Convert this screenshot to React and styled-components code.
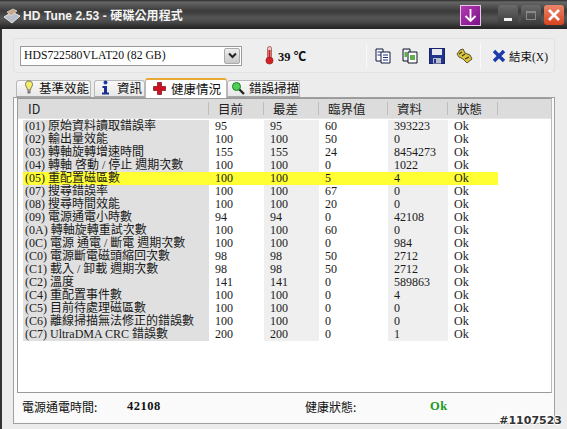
// Dependencies
// -----------------------------------------------
import React from 'react';
import styled, { createGlobalStyle } from 'styled-components';

// Data
// -----------------------------------------------
const COLUMNS = [
  { label: '目前', width: 55 },
  { label: '最差', width: 55 },
  { label: '臨界值', width: 69 },
  { label: '資料', width: 60 },
  { label: '狀態', width: 50 }
];

const ROWS = [
  ['(01) 原始資料讀取錯誤率', '95', '95', '60', '393223', 'Ok'],
  ['(02) 輸出量效能', '100', '100', '50', '0', 'Ok'],
  ['(03) 轉軸旋轉增速時間', '155', '155', '24', '8454273', 'Ok'],
  ['(04) 轉軸 啓動 / 停止 週期次數', '100', '100', '0', '1022', 'Ok'],
  ['(05) 重配置磁區數', '100', '100', '5', '4', 'Ok'],
  ['(07) 搜尋錯誤率', '100', '100', '67', '0', 'Ok'],
  ['(08) 搜尋時間效能', '100', '100', '20', '0', 'Ok'],
  ['(09) 電源通電小時數', '94', '94', '0', '42108', 'Ok'],
  ['(0A) 轉軸旋轉重試次數', '100', '100', '60', '0', 'Ok'],
  ['(0C) 電源 通電 / 斷電 週期次數', '100', '100', '0', '984', 'Ok'],
  ['(C0) 電源斷電磁頭縮回次數', '98', '98', '50', '2712', 'Ok'],
  ['(C1) 載入 / 卸載 週期次數', '98', '98', '50', '2712', 'Ok'],
  ['(C2) 溫度', '141', '141', '0', '589863', 'Ok'],
  ['(C4) 重配置事件數', '100', '100', '0', '4', 'Ok'],
  ['(C5) 目前待處理磁區數', '100', '100', '0', '0', 'Ok'],
  ['(C6) 離線掃描無法修正的錯誤數', '100', '100', '0', '0', 'Ok'],
  ['(C7) UltraDMA CRC 錯誤數', '200', '200', '0', '1', 'Ok']
];

const HIGHLIGHT_ROW = 4;

// Styles
// -----------------------------------------------
const GlobalStyle = createGlobalStyle`
  html, body {
    margin: 0;
    padding: 0;
    width: 567px;
    height: 429px;
    overflow: hidden;
    background: #ececec;
  }
  body {
    font-family: "Liberation Serif", "Noto Sans CJK TC", serif;
    font-size: 12px;
    color: #111;
  }
`;

const Window = styled.div`
  position: relative;
  width: 567px;
  height: 429px;
  display: flex;
  flex-direction: column;
  overflow: hidden;
`;

const TitleBar = styled.div`
  height: 29px;
  flex: none;
  box-sizing: border-box;
  padding: 5px 3px 0 3px;
  display: flex;
  align-items: flex-start;
  background: linear-gradient(#2a2a2a 0, #666 2px, #3a3a3a 11px, #555 18px, #484848 22px, #262626 28px);
`;

const TitleIcon = styled.div`
  margin-top: 3px;
  display: flex;
`;

const Title = styled.span`
  margin: 3px 0 0 2px;
  font: bold 12px/17px "Liberation Sans", "Noto Sans CJK TC", sans-serif;
  color: #f4f4f4;
  letter-spacing: 0.1px;
`;

const TitleSpacer = styled.div`
  flex: 1;
`;

const DownloadButton = styled.div`
  width: 21px;
  height: 21px;
  box-sizing: border-box;
  border: 1px solid #e8c8e8;
  background: linear-gradient(135deg, #b23ab2, #7d1187);
  margin-right: 17px;
  display: flex;
  align-items: center;
  justify-content: center;
`;

const WindowButton = styled.div`
  width: 20px;
  height: 20px;
  margin-left: ${(p) => (p.$first ? '0' : '3px')};
  box-sizing: border-box;
  border-radius: 3px;
  display: flex;
  align-items: center;
  justify-content: center;
  background: ${(p) => (p.$close
    ? 'linear-gradient(#e8876a, #d8431f)'
    : 'linear-gradient(#6a6a6a, #3a3a3a)')};
`;

const MinGlyph = styled.span`
  width: 8px;
  height: 3px;
  margin-top: 8px;
  background: #f4f4f4;
`;

const MaxGlyph = styled.span`
  width: 10px;
  height: 9px;
  box-sizing: border-box;
  border: 1px solid #888;
  border-top-width: 2px;
`;

const Body = styled.div`
  flex: 1;
  min-height: 0;
  display: flex;
  flex-direction: column;
  border-left: 2px solid #333;
  padding: 9px 12px 5px 11px;
  background: #ececec;
`;

const Toolbar = styled.div`
  height: 35px;
  flex: none;
  box-sizing: border-box;
  border: 1px solid #e2e2e2;
  border-radius: 4px;
  display: flex;
  align-items: center;
  padding-left: 6px;
  background: #eeeeee;
`;

const DriveSelect = styled.div`
  width: 222px;
  height: 20px;
  box-sizing: border-box;
  border: 1px solid #9a9a9a;
  background: #fff;
  display: flex;
  align-items: center;
  justify-content: space-between;
  padding-left: 3px;
  font-size: 11.7px;
`;

const SelectArrow = styled.div`
  width: 16px;
  height: 16px;
  margin-right: 1px;
  border: 1px solid #aaa;
  box-sizing: border-box;
  border-radius: 2px;
  background: linear-gradient(#eee, #c8c8c8);
  display: flex;
  align-items: center;
  justify-content: center;
`;

const Temperature = styled.div`
  margin-left: 22px;
  display: flex;
  align-items: center;
  gap: 3px;
  width: 102px;
  font: bold 12.5px "Liberation Serif", "Noto Sans CJK TC", serif;
`;

const ToolGroup = styled.div`
  display: flex;
  align-items: center;
  gap: 11px;
  height: 24px;
  padding: 0 7px 0 8px;
  border-left: 1px solid #fafafa;
  border-right: 1px solid #fafafa;
`;

const ExitButton = styled.div`
  margin-left: 11px;
  display: flex;
  align-items: center;
  gap: 3px;
  font-size: 11.5px;
  white-space: nowrap;
`;

const TabBar = styled.div`
  height: 19px;
  flex: none;
  margin-top: 5px;
  padding-left: 3px;
  display: flex;
  align-items: flex-end;
  position: relative;
  z-index: 1;
`;

const Tab = styled.div`
  box-sizing: border-box;
  width: ${(p) => p.$width}px;
  height: ${(p) => (p.$active ? '20px' : '17px')};
  margin-bottom: ${(p) => (p.$active ? '-1px' : '0')};
  margin-right: ${(p) => p.$after || 0}px;
  padding: 0 0 2px ${(p) => p.$pad}px;
  display: flex;
  align-items: center;
  gap: ${(p) => p.$gap}px;
  border: 1px solid #b9b9b9;
  border-bottom: ${(p) => (p.$active ? 'none' : '1px solid #a8a8a8')};
  border-top: ${(p) => (p.$active ? '2px solid #e8a832' : '1px solid #b9b9b9')};
  border-radius: 3px 3px 0 0;
  background: ${(p) => (p.$active ? '#fff' : 'linear-gradient(#f8f8f8, #e8e8e8)')};
  font: 12.5px "Noto Sans CJK TC", sans-serif;
  white-space: nowrap;
`;

const Panel = styled.div`
  flex: 1;
  min-height: 0;
  display: flex;
  flex-direction: column;
  box-sizing: border-box;
  border: 1px solid #a0a0a0;
  background: #fafafa;
`;

const ListView = styled.div`
  height: 295px;
  flex: none;
  margin: 0 2px 0 3px;
  box-sizing: border-box;
  border: 1px solid #9a9a9a;
  border-right-color: #bbb;
  background: #fff;
`;

const HeaderRow = styled.div`
  height: 19px;
  display: flex;
  align-items: center;
  background: #dcdcdc;
  border-bottom: 1px solid #e6e6e6;
  box-sizing: content-box;
  font: 12.5px "Noto Sans CJK TC", sans-serif;
  margin-bottom: 1px;
`;

const HeaderCell = styled.div`
  box-sizing: border-box;
  width: ${(p) => p.$width}px;
  height: 13px;
  padding-left: ${(p) => p.$pad || 9}px;
  display: flex;
  align-items: center;
  border-right: 1px solid #bdbdbd;
  color: #222;
`;

const DataRow = styled.div`
  height: 13px;
  display: flex;
  align-items: center;
  line-height: 13px;
  padding-left: 5px;
`;

const Cell = styled.div`
  box-sizing: border-box;
  width: ${(p) => p.$width}px;
  height: 13px;
  padding-left: ${(p) => p.$pad}px;
  background: ${(p) => (p.$active ? '#ffff33' : p.$bg || 'transparent')};
  white-space: nowrap;
  color: #1a1a1a;
  font-size: 12px;
`;

const StatusBar = styled.div`
  flex: 1;
  display: flex;
  align-items: center;
  padding: 0 0 4px 8px;
  font: 12px "Noto Sans CJK TC", sans-serif;
`;

const StatusLabel = styled.span`
  width: ${(p) => p.$width}px;
`;

const StatusValue = styled.span`
  width: ${(p) => p.$width}px;
  font: bold 12.5px "Liberation Serif", serif;
  letter-spacing: 0.5px;
  color: ${(p) => p.$color || '#111'};
`;

const Watermark = styled.div`
  position: absolute;
  right: 5px;
  bottom: 2px;
  font: bold 11px "DejaVu Sans", sans-serif;
  color: #333;
  text-shadow: 1px 0 #fff, -1px 0 #fff, 0 1px #fff, 0 -1px #fff;
`;

// Icons
// -----------------------------------------------
const DiskIcon = () => (
  <svg width="18" height="16" viewBox="0 0 18 16">
    <path d="M1 9 L9 4 L17 8 L9 15 Z" fill="#b9c0cc" stroke="#e8e8e8" />
    <path d="M4 4 L10 1 L14 3 L8 8 Z" fill="#c9a88a" stroke="#eee" strokeWidth="0.6" />
  </svg>
);

const ArrowDownIcon = () => (
  <svg width="13" height="15" viewBox="0 0 13 15">
    <path d="M6.5 1 V13 M1.5 8 L6.5 13 L11.5 8" fill="none" stroke="#fff" strokeWidth="1.8" />
  </svg>
);

const CloseIcon = () => (
  <svg width="12" height="12" viewBox="0 0 12 12">
    <path d="M1 1 L11 11 M11 1 L1 11" stroke="#fff" strokeWidth="2.6" />
  </svg>
);

const ChevronIcon = () => (
  <svg width="9" height="7" viewBox="0 0 9 7">
    <path d="M1 1.5 L4.5 5 L8 1.5" fill="none" stroke="#222" strokeWidth="2" />
  </svg>
);

const ThermometerIcon = () => (
  <svg width="11" height="19" viewBox="0 0 11 19">
    <rect x="3.5" y="0.5" width="4" height="12" rx="2" fill="#f2c9c9" stroke="#8a3a3a" strokeWidth="0.7" />
    <rect x="4.5" y="4" width="2" height="9" fill="#cc1c1c" />
    <circle cx="5.5" cy="14.5" r="3.6" fill="#d42020" stroke="#8a2020" strokeWidth="0.6" />
  </svg>
);

const DocsIcon = () => (
  <svg width="16" height="16" viewBox="0 0 16 16">
    <path d="M1 1 H8 V13 H1 Z" fill="#fff" stroke="#10183c" />
    <path d="M6 4 H15 V15 H6 Z" fill="#fff" stroke="#10183c" />
    <path d="M2.5 4 H6 M2.5 7 H6 M8 7 H13 M8 9.5 H13 M8 12 H13" stroke="#1c2f7a" />
  </svg>
);

const GreenDocsIcon = () => (
  <svg width="16" height="16" viewBox="0 0 16 16">
    <path d="M1 1 H8 V13 H1 Z" fill="#eef" stroke="#112" />
    <path d="M6 4 H15 V15 H6 Z" fill="#fff" stroke="#112" />
    <rect x="2.5" y="4" width="3" height="5" fill="#5fb04a" />
    <rect x="8" y="7" width="5" height="5" fill="#5fb04a" />
  </svg>
);

const SaveIcon = () => (
  <svg width="16" height="16" viewBox="0 0 16 16">
    <rect x="0.5" y="0.5" width="15" height="15" fill="#23348c" stroke="#1a2468" />
    <rect x="3" y="1" width="10" height="6" fill="#e8e8f0" />
    <rect x="4" y="10" width="8" height="5.5" fill="#b8bccc" />
    <rect x="5" y="11" width="2" height="4" fill="#23348c" />
  </svg>
);

const KeysIcon = () => (
  <svg width="17" height="16" viewBox="0 0 17 16">
    <path d="M1 6 L4 2 L7 1 L9 5 L14 7 L16 11 L11 15 L7 11 L3 9 Z" fill="#dcc43c" stroke="#4a4420" strokeWidth="0.9" />
    <path d="M3 6 L6 4 M6 8 L9 6 M9 11 L13 9" stroke="#3a3a28" strokeWidth="1.3" />
  </svg>
);

const ExitIcon = () => (
  <svg width="14" height="14" viewBox="0 0 14 14">
    <path d="M2 2 L12 12 M12 2 L2 12" stroke="#1c3aa8" strokeWidth="3.4" />
  </svg>
);

const BulbIcon = () => (
  <svg width="10" height="15" viewBox="0 0 10 15">
    <path d="M5 1 C2 1 1.5 3 1.5 4.5 C1.5 6.5 3.5 7.5 3.5 10 H6.5 C6.5 7.5 8.5 6.5 8.5 4.5 C8.5 3 8 1 5 1 Z" fill="#f6ee6a" stroke="#555" strokeWidth="0.8" />
    <rect x="3.5" y="10.5" width="3" height="3" fill="#777" />
  </svg>
);

const InfoIcon = () => (
  <svg width="9" height="15" viewBox="0 0 9 15">
    <circle cx="4.5" cy="2.5" r="2" fill="#1c3aa8" />
    <path d="M1.5 6 H6 V12.5 H8 V14.5 H1 V12.5 H3 V8 H1.5 Z" fill="#1c2f90" />
  </svg>
);

const CrossIcon = () => (
  <svg width="13" height="13" viewBox="0 0 13 13">
    <path d="M4.5 0.5 H8.5 V4.5 H12.5 V8.5 H8.5 V12.5 H4.5 V8.5 H0.5 V4.5 H4.5 Z" fill="#d01020" stroke="#701018" strokeWidth="0.7" />
  </svg>
);

const SearchIcon = () => (
  <svg width="14" height="14" viewBox="0 0 14 14">
    <path d="M8 8 L13 13" stroke="#222" strokeWidth="2.4" />
    <circle cx="5.5" cy="5.5" r="4" fill="#50d050" stroke="#1a7a2a" />
  </svg>
);

// -----------------------------------------------
// COMPONENT->APP --------------------------------
// -----------------------------------------------
const App = () => (
  <Window>
    <GlobalStyle />
    <TitleBar>
      <TitleIcon><DiskIcon /></TitleIcon>
      <Title>HD Tune 2.53 - 硬碟公用程式</Title>
      <TitleSpacer />
      <DownloadButton><ArrowDownIcon /></DownloadButton>
      <WindowButton $first><MinGlyph /></WindowButton>
      <WindowButton><MaxGlyph /></WindowButton>
      <WindowButton $close><CloseIcon /></WindowButton>
    </TitleBar>

    <Body>
      <Toolbar>
        <DriveSelect>
          HDS722580VLAT20 (82 GB)
          <SelectArrow><ChevronIcon /></SelectArrow>
        </DriveSelect>
        <Temperature>
          <ThermometerIcon />
          39 ℃
        </Temperature>
        <ToolGroup>
          <DocsIcon />
          <GreenDocsIcon />
          <SaveIcon />
          <KeysIcon />
        </ToolGroup>
        <ExitButton>
          <ExitIcon />
          結束(X)
        </ExitButton>
      </Toolbar>

      <TabBar>
        <Tab $width={75} $after={3} $pad={7} $gap={5}><BulbIcon />基準效能</Tab>
        <Tab $width={51} $pad={6} $gap={7}><InfoIcon />資訊</Tab>
        <Tab $width={82} $pad={7} $gap={5} $active><CrossIcon />健康情況</Tab>
        <Tab $width={73} $pad={3} $gap={4}><SearchIcon />錯誤掃描</Tab>
      </TabBar>

      <Panel>
        <ListView>
          <HeaderRow>
            <HeaderCell $width={191} $pad={10}>ID</HeaderCell>
            {COLUMNS.map((col) => (
              <HeaderCell key={col.label} $width={col.width}>{col.label}</HeaderCell>
            ))}
          </HeaderRow>
          {ROWS.map((row, index) => {
            const active = index === HIGHLIGHT_ROW;
            return (
              <DataRow key={row[0]}>
                <Cell $width={186} $pad={2} $bg="#e0e0e0" $active={active}>{row[0]}</Cell>
                <Cell $width={55} $pad={6} $active={active}>{row[1]}</Cell>
                <Cell $width={55} $pad={6} $bg="#efefef" $active={active}>{row[2]}</Cell>
                <Cell $width={69} $pad={6} $active={active}>{row[3]}</Cell>
                <Cell $width={60} $pad={6} $bg="#efefef" $active={active}>{row[4]}</Cell>
                <Cell $width={50} $pad={6} $active={active}>{row[5]}</Cell>
              </DataRow>
            );
          })}
        </ListView>

        <StatusBar>
          <StatusLabel $width={105}>電源通電時間:</StatusLabel>
          <StatusValue $width={178}>42108</StatusValue>
          <StatusLabel $width={125}>健康狀態:</StatusLabel>
          <StatusValue $width={40} $color="#1a9a1a">Ok</StatusValue>
        </StatusBar>
      </Panel>
    </Body>

    <Watermark>#1107523</Watermark>
  </Window>
);

// Export
// -----------------------------------------------
export default App;
